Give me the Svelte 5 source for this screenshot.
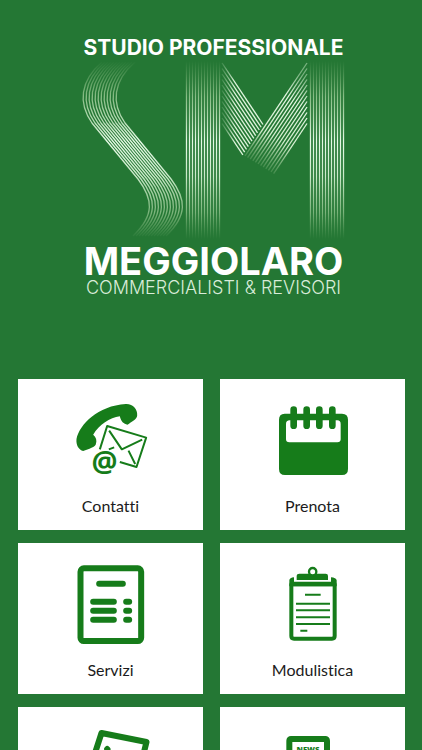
<script>
	//Menu tiles, two per row
	let tiles = [
		{ icon: 'contacts', label: 'Contatti', view: '31.5 30 240 240' },
		{ icon: 'calendar', label: 'Prenota', view: '30 30 240 240' },
		{ icon: 'services', label: 'Servizi', view: '31.5 27 240 240' },
		{ icon: 'forms', label: 'Modulistica', view: '30 27 240 240' },
		{ icon: 'notes', label: '', view: '31.5 84 240 240' },
		{ icon: 'news', label: '', view: '30 84 240 240' }
	]

	//The monogram is made of 12 parallel strokes per limb
	const strokes = Array.from({ length: 12 }, (_, i) => i)

	function leftArm(i){
		const x = 263 - 1.83 * i
		const y = 64 + 5.5 * i
		return `M222 ${y}L${x} ${y + 1.5 * (x - 222)}`
	}

	function rightArm(i){
		const x = 245 + 2.6 * i
		const y = 64 + 5.5 * i
		return `M307 ${y}L${x} ${y + 1.5 * (307 - x)}`
	}
</script>

<main>
	<header>
		<p class="kind">STUDIO PROFESSIONALE</p>
		<svg class="monogram" viewBox="80 60 267 184" aria-hidden="true">
			<defs>
				<linearGradient id="fade" gradientUnits="userSpaceOnUse" x1="0" y1="62" x2="0" y2="240">
					<stop offset="0" stop-color="#a5cf96" stop-opacity="0" />
					<stop offset="0.2" stop-color="#b4dcaa" stop-opacity="0.7" />
					<stop offset="0.45" stop-color="#e6fae6" />
					<stop offset="0.65" stop-color="#d2efd0" stop-opacity="0.95" />
					<stop offset="0.85" stop-color="#b4dcaa" stop-opacity="0.6" />
					<stop offset="1" stop-color="#a5cf96" stop-opacity="0" />
				</linearGradient>
				<linearGradient id="fadeLeft" gradientUnits="userSpaceOnUse" x1="222" y1="0" x2="264" y2="0">
					<stop offset="0" stop-color="#cfeecb" stop-opacity="0.15" />
					<stop offset="0.3" stop-color="#dff5dc" />
					<stop offset="1" stop-color="#dff5dc" />
				</linearGradient>
				<linearGradient id="fadeRight" gradientUnits="userSpaceOnUse" x1="310" y1="80" x2="256" y2="170">
					<stop offset="0" stop-color="#cfeecb" stop-opacity="0.5" />
					<stop offset="0.25" stop-color="#e6f8e4" />
					<stop offset="0.65" stop-color="#d4efcf" />
					<stop offset="1" stop-color="#a5cf96" stop-opacity="0.1" />
				</linearGradient>
			</defs>
			<g fill="none" stroke-width="1.3">
				{#each strokes as i}
					<path
						d="M102 63C80 82 78 104 92 124L138 180C153 200 155 216 133 237"
						transform="translate({i * 3} 0)"
						stroke="url(#fade)"
					/>
					<path d="M{186.5 + i * 3} 62l.01 178" stroke="url(#fade)" />
					<path d="M{310.5 + i * 3} 62l.01 178" stroke="url(#fade)" />
					<path d={leftArm(i)} stroke="url(#fadeLeft)" />
					<path d={rightArm(i)} stroke="url(#fadeRight)" />
				{/each}
			</g>
		</svg>
		<h1>MEGGIOLARO</h1>
		<p class="trade">COMMERCIALISTI &amp; REVISORI</p>
	</header>

	<nav>
		{#each tiles as tile}
			<a href="#{tile.icon}" class="tile">
				<svg class="icon" viewBox={tile.view} aria-hidden="true">
					{#if tile.icon === 'contacts'}
						<path d="M48 147C57 104 112 47 196 42C217 41 232 57 230 77C229 88 213 95 201 104C190 103 181 94 178 79C148 82 116 105 98 134C107 141 110 151 106 163C106 169 84 179 68 183C55 180 46 165 48 147Z" />
						<g class="line thin">
							<path d="M118 178L140 108L257 143L228 231L178 216" />
							<path d="M146 122L184 178L245 149M204 182L224 222M145 178L161 172" />
						</g>
						<text class="at" x="132" y="245">@</text>
					{:else if tile.icon === 'calendar'}
						<path fill-rule="evenodd" d="M65 71H237Q255 71 255 89V237Q255 255 237 255H66Q48 255 48 237V89Q48 71 65 71ZM80 91Q69 91 69 102V148Q69 157 79 157H223Q233 157 233 148V102Q233 91 223 91Z" />
						<path class="ring" d="M92 59V107M131 59V107M169 59V107M208 59V107" />
					{:else if tile.icon === 'services'}
						<rect class="line thick" x="60" y="40" width="182" height="218" rx="10" />
						<path class="line thick" d="M116 86H187M98 140H160M98 167H160M98 194H160M197 140H206M197 167H206M197 194H206" />
					{:else if tile.icon === 'forms'}
						<path class="line board" d="M85 88V243Q85 251 93 251H207Q215 251 215 243V88Z" />
						<path d="M79 94V76Q80 68 93 67V80H204V67Q219 68 221 76V94Z" />
						<path d="M101 75V62Q101 56 109 56H188Q195 56 195 62V75Z" />
						<circle class="clip" cx="149" cy="50" r="11" />
						<path class="line rule" d="M126 119H173M99 146H201M99 166H201M99 187H201M99 207H201M112 227H133" />
					{:else if tile.icon === 'notes'}
						<path class="line thick" d="M123 99L258 126L222 270L78 238Z" />
						<path class="line thick" d="M140 147L141 148M122 190L190 206" />
					{:else}
						<rect class="line thick" x="79" y="117" width="113" height="145" rx="5" />
						<text class="news" x="135" y="155">NEWS</text>
						<path class="line rule" d="M104 180H166M104 200H166M104 220H166" />
					{/if}
				</svg>
				<span>{tile.label}</span>
			</a>
		{/each}
	</nav>
</main>

<style>
	:global(body) {
		margin: 0;
		background: #247734;
	}
	main {
		height: 100vh;
		overflow-y: auto;
		scrollbar-width: none;
		background: #247734;
	}
	header {
		display: flex;
		flex-direction: column;
		align-items: center;
		padding: 37px 0 82px 5px;
		color: #fff;
		font-family: Inter, sans-serif;
		text-align: center;
		white-space: nowrap;
	}
	header p, h1 {
		margin: 0;
	}
	.kind {
		font-size: 21px;
		font-weight: 700;
		line-height: 22px;
	}
	.monogram {
		display: block;
		width: 267px;
		height: 184px;
	}
	h1 {
		font-size: 38px;
		font-weight: 700;
		line-height: 36px;
	}
	.trade {
		color: #d9ecd9;
		font-size: 18px;
		font-weight: 300;
		line-height: 18px;
	}
	nav {
		display: grid;
		grid-template-columns: 1fr 1fr;
		gap: 13px 17px;
		padding: 0 17px 18px 18px;
	}
	.tile {
		display: flex;
		flex-direction: column;
		align-items: center;
		gap: 14px;
		padding: 21px 8px 12px;
		background: #fff;
		color: #1b1b20;
		font-family: Lato, sans-serif;
		font-size: 16px;
		font-variant-ligatures: none;
		line-height: 24px;
		text-decoration: none;
	}
	.tile span {
		min-height: 24px;
	}
	.icon {
		width: 80px;
		height: 80px;
		fill: #167c1a;
	}
	.line {
		fill: none;
		stroke: #167c1a;
		stroke-linecap: round;
		stroke-linejoin: round;
	}
	.thin {
		stroke-width: 6;
		stroke-linecap: butt;
	}
	.thick {
		stroke-width: 18;
	}
	.board {
		stroke-width: 12;
	}
	.rule {
		stroke-width: 6;
		stroke-linecap: butt;
	}
	.clip {
		fill: #fff;
		stroke: #167c1a;
		stroke-width: 7;
	}
	.ring {
		stroke: #167c1a;
		stroke-width: 20;
		stroke-linecap: round;
	}
	.at {
		font: 700 87px "Open Sans", sans-serif;
		text-anchor: middle;
	}
	.news {
		font: 800 23px "Open Sans", sans-serif;
		text-anchor: middle;
	}
</style>
